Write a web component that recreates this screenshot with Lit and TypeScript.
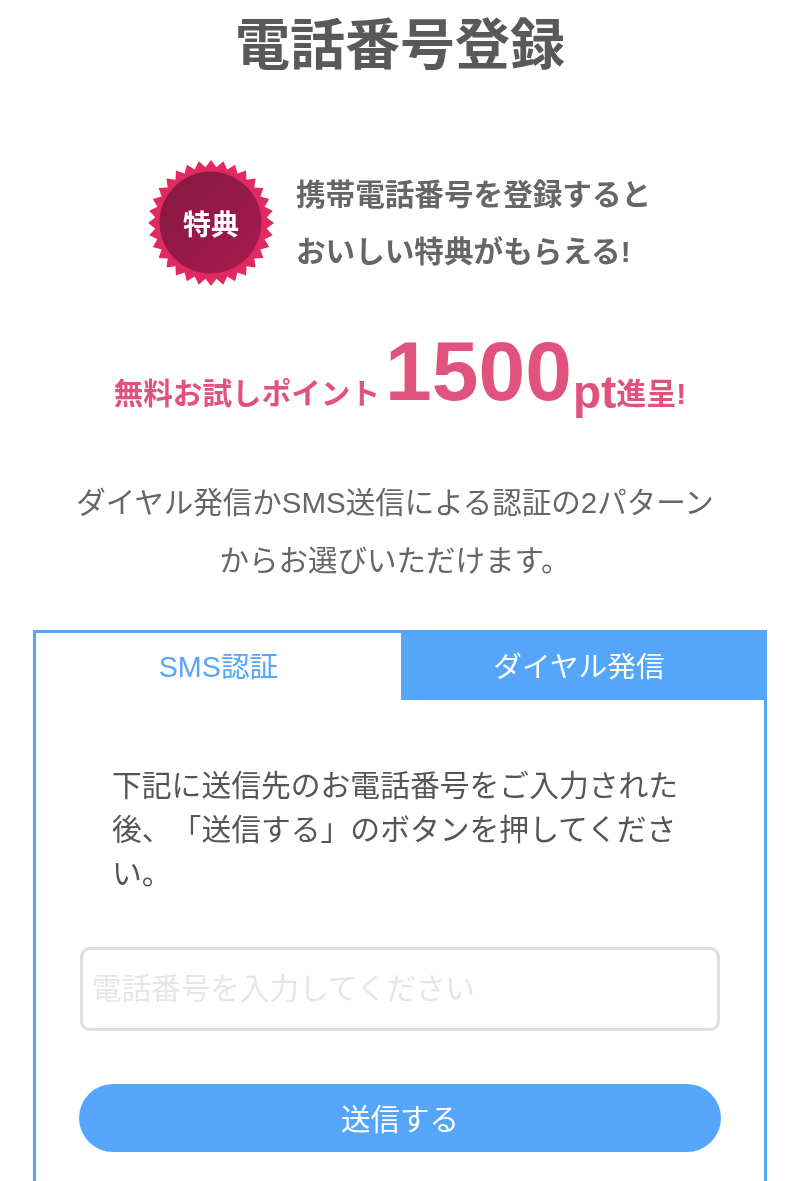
import { LitElement, html, css, svg } from "lit";
import { customElement } from "lit/decorators.js";

function starPoints(cx: number, cy: number, outer: number, inner: number, teeth: number) {
  const pts: string[] = [];
  for (let i = 0; i < teeth * 2; i++) {
    const r = i % 2 === 0 ? outer : inner;
    const a = (Math.PI * i) / teeth - Math.PI / 2;
    pts.push(`${(cx + r * Math.cos(a)).toFixed(2)},${(cy + r * Math.sin(a)).toFixed(2)}`);
  }
  return pts.join(" ");
}

@customElement("app-root")
export class AppRoot extends LitElement {
  static styles = css`
    :host {
      display: block;
      width: 800px;
      height: 1181px;
      overflow: hidden;
      background: #fff;
      font-family: "Liberation Sans", "Noto Sans CJK JP", sans-serif;
      color: #666;
      text-spacing-trim: space-all;
    }
    .page {
      display: flex;
      flex-direction: column;
      align-items: center;
      filter: blur(0.7px);
    }
    h1 {
      margin: 0;
      padding-top: 5px;
      font-size: 55px;
      line-height: 80px;
      font-weight: 700;
      color: #595959;
    }
    .perk {
      display: flex;
      align-items: center;
      gap: 22px;
      margin-top: 75px;
      width: 504px;
    }
    .badge {
      flex: none;
      position: relative;
      width: 126px;
      height: 126px;
    }
    .badge svg { display: block; }
    .badge span {
      position: absolute;
      inset: 0;
      display: flex;
      align-items: center;
      justify-content: center;
      color: #fff;
      font-size: 28px;
      font-weight: 700;
    }
    .perk p {
      margin: 0;
      font-size: 29.6px;
      line-height: 57px;
      font-weight: 700;
      color: #666;
      white-space: nowrap;
    }
    .points {
      margin-top: 35px;
      height: 100px;
      line-height: 100px;
      color: #e2527f;
      font-weight: 700;
      font-size: 29.6px;
      white-space: nowrap;
      text-align: center;
    }
    .points .num {
      font-size: 84px;
      margin-left: 5px;
    }
    .points .unit {
      font-size: 46px;
      vertical-align: -8px;
      margin-left: 1px;
    }
    .points .tail { font-size: 30px; vertical-align: -4px; }
    .points .head { vertical-align: -4px; }
    .lead {
      margin: 53px 0 0;
      padding-right: 10px;
      text-align: center;
      font-size: 29.5px;
      line-height: 58px;
      color: #666;
      white-space: nowrap;
    }
    .card {
      box-sizing: border-box;
      width: 734px;
      margin-top: 40px;
      border: 3px solid #55a5fb;
      border-bottom: none;
      flex: none;
      height: 700px;
    }
    .tabs {
      display: grid;
      grid-template-columns: 365px 1fr;
      height: 67px;
    }
    .tab {
      display: flex;
      align-items: center;
      justify-content: center;
      font-size: 28.7px;
      padding-bottom: 4px;
    }
    .tab.on { color: #55a5fb; background: #fff; }
    .tab.off { color: #fff; background: #55a5fb; padding-right: 7px; }
    .body {
      padding: 64px 43px 0;
    }
    .body p {
      margin: 0;
      padding: 0 30px 0 33px;
      font-size: 29.8px;
      line-height: 44px;
      color: #555;
    }
    .field {
      box-sizing: border-box;
      display: flex;
      align-items: center;
      height: 84px;
      margin-top: 51px;
      margin-inline: 1px;
      padding: 0 9px 5px;
      border: 3px solid #dedede;
      border-radius: 10px;
      font-size: 29.6px;
      color: #e6e6e6;
    }
    .send {
      display: flex;
      align-items: center;
      justify-content: center;
      height: 68px;
      margin-top: 53px;
      padding-bottom: 3px;
      box-sizing: border-box;
      border-radius: 34px;
      background: #55a5fb;
      color: #fff;
      font-size: 29.5px;
    }
  `;

  render() {
    return html`
      <div class="page">
        <h1>電話番号登録</h1>
        <div class="perk">
          <div class="badge">
            <svg width="126" height="126" viewBox="0 0 126 126">
              <defs>
                <linearGradient id="g" x1="0" y1="0" x2="1" y2="1">
                  <stop offset="0" stop-color="#85193f"></stop>
                  <stop offset="1" stop-color="#a81a50"></stop>
                </linearGradient>
              </defs>
              ${svg`<polygon points=${starPoints(63, 63, 63, 56, 32)} fill="#e22a62"></polygon>`}
              <circle cx="62.5" cy="62.5" r="51" fill="url(#g)"></circle>
            </svg>
            <span>特典</span>
          </div>
          <p>携帯電話番号を登録すると<br />おいしい特典がもらえる!</p>
        </div>
        <div class="points">
          <span class="head">無料お試しポイント</span><span class="num">1500</span><span class="unit">pt</span><span class="tail">進呈!</span>
        </div>
        <p class="lead">ダイヤル発信かSMS送信による認証の2パターン<br />からお選びいただけます。</p>
        <div class="card">
          <div class="tabs">
            <div class="tab on">SMS認証</div>
            <div class="tab off">ダイヤル発信</div>
          </div>
          <div class="body">
            <p>下記に送信先のお電話番号をご入力された後、「送信する」のボタンを押してください。</p>
            <div class="field">電話番号を入力してください</div>
            <div class="send">送信する</div>
          </div>
        </div>
      </div>
    `;
  }
}
